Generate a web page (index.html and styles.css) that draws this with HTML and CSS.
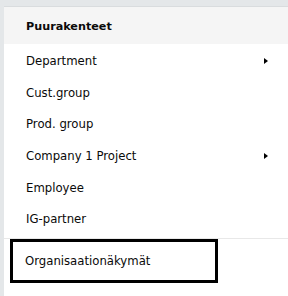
FILE: index.html
```html
<!DOCTYPE html>
<html lang="fi">
<head>
    <meta charset="UTF-8">
    <title>Puurakenteet</title>
    <link rel="stylesheet" href="styles.css">
</head>
<body>
    <div class="menu">
        <!-- heading -->
        <div class="menu-head">Puurakenteet</div>
        <!-- items -->
        <div class="menu-list">
            <div class="menu-item sub">Department</div>
            <div class="menu-item">Cust.group</div>
            <div class="menu-item">Prod. group</div>
            <div class="menu-item sub">Company 1 Project</div>
            <div class="menu-item">Employee</div>
            <div class="menu-item">IG-partner</div>
        </div>
        <!-- views -->
        <div class="menu-foot">
            <div class="menu-item focused">Organisaationäkymät</div>
        </div>
    </div>
</body>
</html>
```

FILE: styles.css
```css
body {
    margin: 0;
    padding: 0;
    background-color: #e4e7e9;
    font-family: "DejaVu Sans", Verdana, sans-serif;
    font-size: 11.7px;
    color: #0a0a0a;
}

.menu {
    margin: 6px 0 0 4px;
    height: 290px;
    background-color: white;
    border-top: 1px solid #d9dcde;
}

.menu-head {
    height: 34px;
    line-height: 34px;
    padding: 3px 0 0 22px;
    background-color: #f5f5f5;
    font-weight: bold;
    font-size: 11.2px;
}

.menu-list {
    padding-top: 2px;
}

.menu-item {
    position: relative;
    height: 31.7px;
    line-height: 31.7px;
    padding-left: 22px;
}

.menu-item.sub::after {
    content: "";
    position: absolute;
    right: 20px;
    top: 12px;
    border-top: 3.5px solid transparent;
    border-bottom: 3.5px solid transparent;
    border-left: 4px solid black;
}

.menu-foot {
    margin-top: 2px;
    border-top: 1px solid #e8e8e8;
    padding-left: 6px;
}

.menu-foot .menu-item {
    width: 190px;
    height: 38px;
    line-height: 38px;
    padding-left: 12px;
    border: 3px solid black;
}
```
